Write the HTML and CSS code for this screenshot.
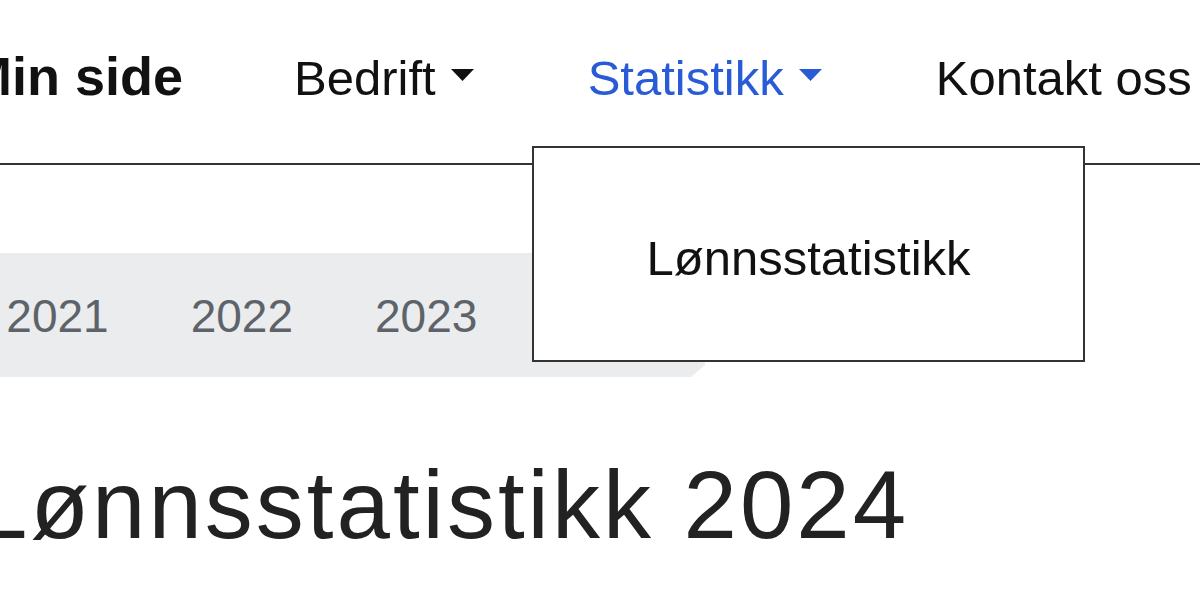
FILE: index.html
```html
<!DOCTYPE html>
<html lang="no">
<head>
<meta charset="utf-8">
<title>Lønnsstatistikk 2024</title>
<link rel="stylesheet" href="styles.css">
</head>
<body>
<div class="page">
  <header class="header">
    <nav class="nav">
      <a class="nav-brand" href="#">Min side</a>
      <a class="nav-item" href="#">Bedrift<svg class="caret" width="23" height="12" viewBox="0 0 23 12"><path d="M0 0H23L11.5 12Z"/></svg></a>
      <a class="nav-item active" href="#">Statistikk<svg class="caret" width="23" height="12" viewBox="0 0 23 12"><path d="M0 0H23L11.5 12Z"/></svg></a>
      <a class="nav-item" href="#">Kontakt oss</a>
    </nav>
  </header>
  <div class="dropdown">
    <a class="dropdown-item" href="#">Lønnsstatistikk</a>
  </div>
  <main class="main">
    <div class="years">
      <a class="year" href="#">2020</a>
      <a class="year" href="#">2021</a>
      <a class="year" href="#">2022</a>
      <a class="year" href="#">2023</a>
      <a class="year" href="#">2024</a>
    </div>
    <h1 class="title">Lønnsstatistikk 2024</h1>
  </main>
</div>
</body>
</html>
```
FILE: styles.css
```css
html, body {
  margin: 0;
  padding: 0;
  background: #ffffff;
}
body {
  width: 1200px;
  height: 600px;
  overflow: hidden;
  font-family: "Liberation Sans", Arial, sans-serif;
  color: #111111;
}
a {
  text-decoration: none;
  color: inherit;
}
.page {
  position: relative;
  width: 1200px;
  height: 600px;
}
.header {
  box-sizing: border-box;
  height: 165px;
  padding-top: 48px;
  border-bottom: 2px solid #333333;
}
.nav {
  display: flex;
  align-items: baseline;
  gap: 114px;
  margin-left: -33px;
  white-space: nowrap;
}
.nav-brand {
  font-weight: bold;
  font-size: 54px;
  line-height: 56px;
  margin-right: -3px;
  color: #111111;
}
.nav-item {
  font-size: 49px;
  line-height: 56px;
  color: #111111;
}
.nav-item.active {
  color: #2a5bd7;
}
.caret {
  display: inline-block;
  margin-left: 15px;
  vertical-align: 14px;
  fill: currentColor;
}
.dropdown {
  position: absolute;
  left: 532px;
  top: 146px;
  box-sizing: border-box;
  width: 553px;
  height: 216px;
  border: 2px solid #333333;
  background: #ffffff;
  padding-top: 82px;
  text-align: center;
  z-index: 2;
}
.dropdown-item {
  font-size: 49px;
  line-height: 56px;
  color: #111111;
}
.main {
  padding-top: 88px;
}
.years {
  box-sizing: border-box;
  display: flex;
  gap: 82px;
  width: 705px;
  height: 124px;
  padding-top: 35px;
  background: #ebecee;
  clip-path: polygon(0 0, 100% 0, 100% calc(100% - 12px), calc(100% - 14px) 100%, 0 100%);
  overflow: hidden;
}
.year {
  flex: none;
  font-size: 46px;
  line-height: 56px;
  color: #5d6369;
}
.year:first-child {
  margin-left: -178px;
}
.title {
  margin: 73px 0 0 -26px;
  font-size: 96px;
  line-height: 110px;
  font-weight: normal;
  letter-spacing: 3px;
  color: #222222;
  white-space: nowrap;
}
```
